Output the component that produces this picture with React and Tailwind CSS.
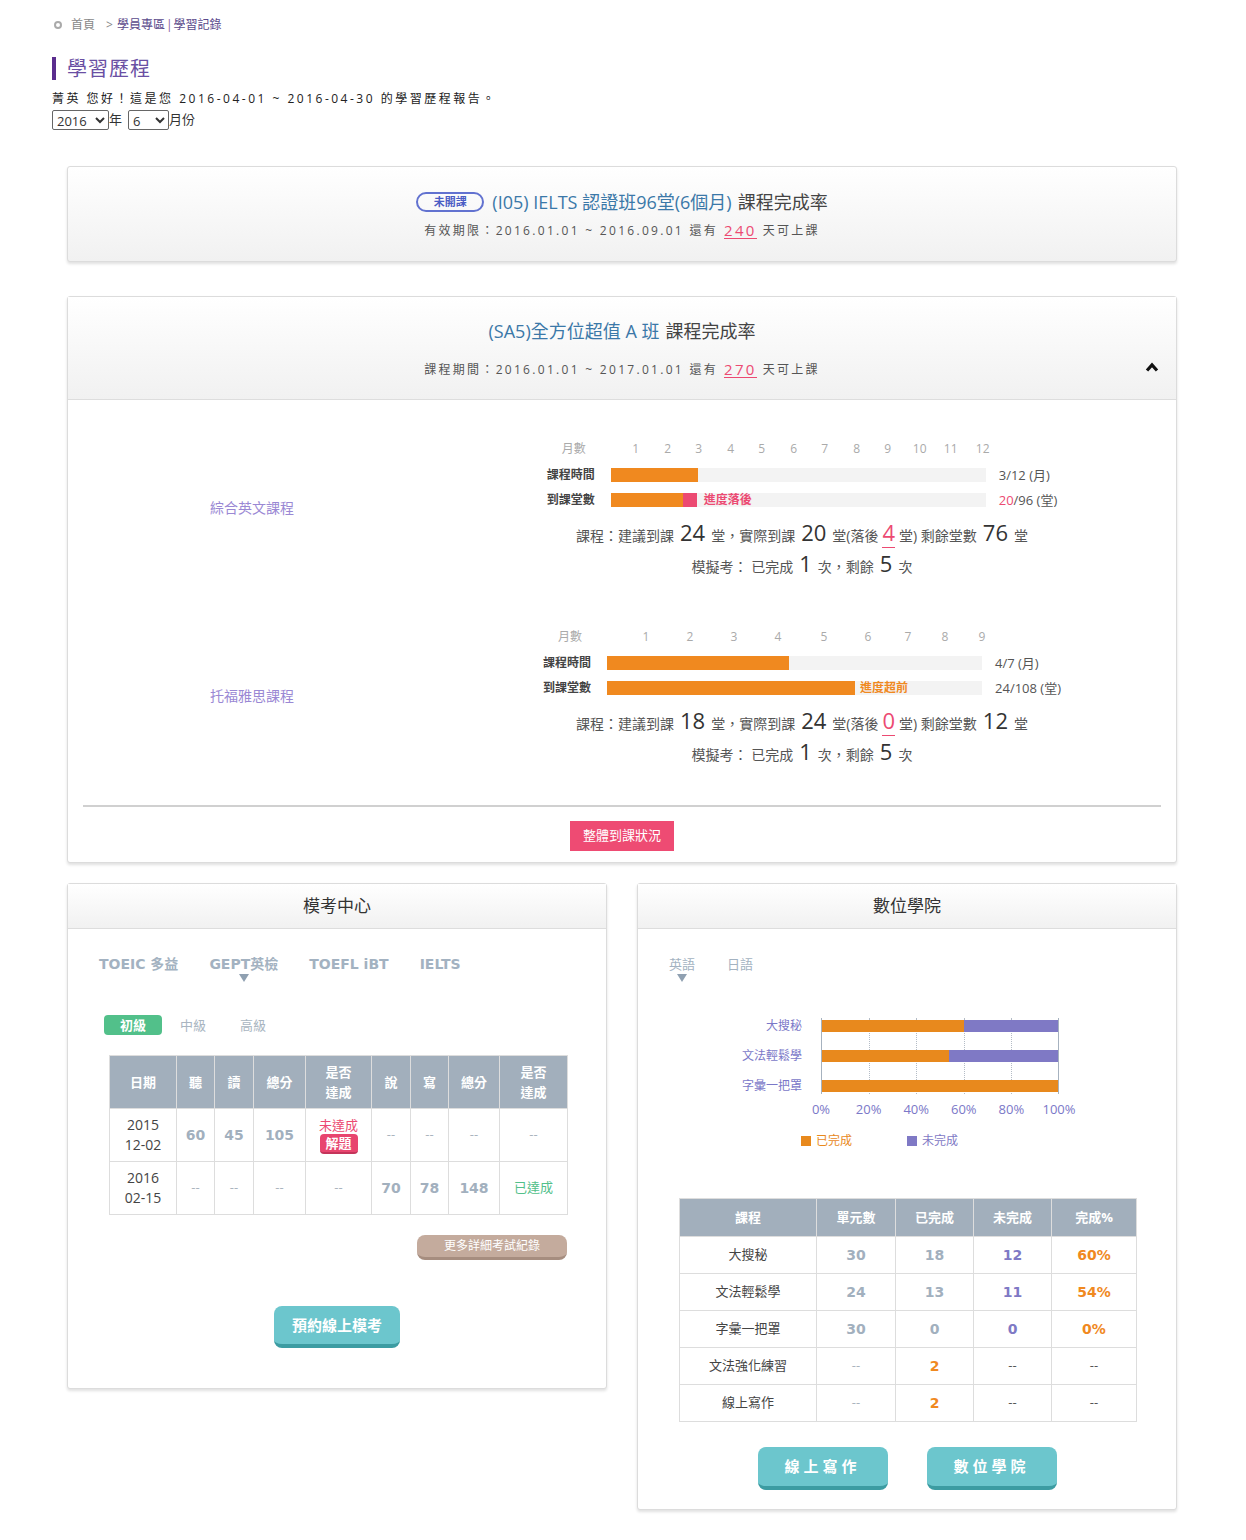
import React from 'react';

const ORANGE = 'bg-[#f0891f]';
const TEAL_BTN =
  'flex items-center justify-center rounded-[8px] border-b-[4px] border-[#3c9ca2] bg-[#6cc6cd] text-white font-bold';

const Card = ({ className = '', children }) => (
  <div
    className={`rounded-[3px] border border-[#dcdcdc] bg-white shadow-[0_2px_3px_rgba(0,0,0,0.12)] ${className}`}
  >
    {children}
  </div>
);

const DaysLeft = ({ n }) => (
  <span className="mx-[6px] border-b border-[#ec4a72] text-[15px] leading-[16px] text-[#ec4a72]">{n}</span>
);

const courses = [
  {
    name: '綜合英文課程',
    months: [1, 2, 3, 4, 5, 6, 7, 8, 9, 10, 11, 12],
    ticks: [25, 57, 88, 120, 151, 183, 214, 246, 277, 309, 340, 372],
    timeFill: 87,
    attendFill: 72,
    behindFill: 14,
    status: '進度落後',
    statusColor: 'text-[#ec4a72]',
    statusGap: 'ml-[7px]',
    timeText: '3/12 (月)',
    done: '20',
    doneColor: 'text-[#ec4a72]',
    total: '/96 (堂)',
    suggest: 24,
    actual: 20,
    behind: 4,
    remain: 76,
  },
  {
    name: '托福雅思課程',
    months: [1, 2, 3, 4, 5, 6, 7, 8, 9],
    ticks: [39, 83, 127, 171, 217, 261, 301, 338, 375],
    timeFill: 182,
    attendFill: 248,
    behindFill: 0,
    status: '進度超前',
    statusColor: 'text-[#f0891f]',
    statusGap: 'ml-[5px]',
    timeText: '4/7 (月)',
    done: '24',
    doneColor: 'text-[#555]',
    total: '/108 (堂)',
    suggest: 18,
    actual: 24,
    behind: 0,
    remain: 12,
  },
];

const Big = ({ children }) => <span className="mx-[6px] text-[22px] text-[#333]">{children}</span>;

const CourseRow = ({ c }) => (
  <div className="flex items-center">
    <div className="w-[338px] pb-[6px] text-center text-[14px] text-[#9a88d4]">{c.name}</div>
    <div className="flex flex-1 flex-col items-center pl-[22px]">
      <div className="flex flex-col">
        <div className="flex h-[16px] items-center">
          <span className="w-[54px] text-center text-[12px] leading-[16px] text-[#aaa]">月數</span>
          <div className="relative ml-[10px] h-[16px] w-[375px]">
            {c.months.map((m, i) => (
              <span
                key={m}
                className="absolute top-0 -translate-x-1/2 text-[12px] leading-[16px] text-[#aaa]"
                style={{ left: c.ticks[i] }}
              >
                {m}
              </span>
            ))}
          </div>
        </div>
        <div className="mt-[11px] flex items-center">
          <span className="w-[54px] text-[12px] font-bold leading-[14px] text-[#444]">課程時間</span>
          <div className="ml-[10px] flex h-[14px] w-[375px] bg-[#f3f3f3]">
            <div className={`h-full ${ORANGE}`} style={{ width: c.timeFill }} />
          </div>
          <span className="ml-[13px] text-[13px] leading-[14px] text-[#555]">{c.timeText}</span>
        </div>
        <div className="mt-[11px] flex items-center">
          <span className="w-[54px] text-[12px] font-bold leading-[14px] text-[#444]">到課堂數</span>
          <div className="ml-[10px] flex h-[14px] w-[375px] items-center bg-[#f3f3f3]">
            <div className={`h-full ${ORANGE}`} style={{ width: c.attendFill }} />
            {c.behindFill > 0 && <div className="h-full bg-[#ec4a72]" style={{ width: c.behindFill }} />}
            <span className={`${c.statusGap} text-[12px] font-bold leading-[14px] ${c.statusColor}`}>{c.status}</span>
          </div>
          <span className="ml-[13px] text-[13px] leading-[14px] text-[#555]">
            <span className={c.doneColor}>{c.done}</span>
            {c.total}
          </span>
        </div>
      </div>
      <p className="mt-[12px] text-[14px] leading-[26px] text-[#555]">
        課程：建議到課<Big>{c.suggest}</Big>堂，實際到課<Big>{c.actual}</Big>堂(落後
        <span className="mx-[4px] border-b border-[#ec4a72] text-[22px] leading-[22px] text-[#ec4a72]">{c.behind}</span>
        堂) 剩餘堂數<Big>{c.remain}</Big>堂
      </p>
      <p className="mt-[1px] text-[14px] leading-[26px] text-[#555]">
        模擬考： 已完成<Big>1</Big>次，剩餘<Big>5</Big>次
      </p>
    </div>
  </div>
);

const NUM = "font-['DejaVu_Sans','Noto_Sans_CJK_TC',sans-serif] font-bold text-[14px] text-[#a2b0be]";
const DASH = 'text-[13px] text-[#aab4be]';

const examCols = [67, 38, 39, 52, 66, 39, 38, 51, 68];
const examHead = ['日期', '聽', '讀', '總分', '是否\n達成', '說', '寫', '總分', '是否\n達成'];

const MockExam = () => (
  <Card className="w-[540px] self-start">
    <div className="flex h-[45px] items-center justify-center border-b border-[#ddd] bg-linear-to-b from-white to-[#f1f1f1] text-[17px] text-[#333]">
      模考中心
    </div>
    <div className="flex flex-col px-[31px] pb-[40px] pt-[25px]">
      <div className="flex gap-[31px] font-['DejaVu_Sans','Noto_Sans_CJK_TC',sans-serif] text-[14px] font-bold leading-[20px] text-[#a3b2c1]">
        <span>TOEIC 多益</span>
        <span className="relative">
          GEPT英檢
          <span className="absolute left-1/2 top-[20px] -translate-x-1/2 border-x-[5px] border-t-[8px] border-x-transparent border-t-[#8fa0b1]" />
        </span>
        <span>TOEFL iBT</span>
        <span>IELTS</span>
      </div>
      <div className="ml-[5px] mt-[41px] flex gap-[2px] text-[13px] leading-[20px]">
        <span className="w-[58px] rounded-[4px] bg-[#52c08a] text-center font-bold text-white">初級</span>
        <span className="w-[58px] text-center text-[#a9b5c1]">中級</span>
        <span className="w-[58px] text-center text-[#a9b5c1]">高級</span>
      </div>
      <table className="ml-[10px] mt-[20px] w-[458px] table-fixed border-collapse text-center">
        <colgroup>
          {examCols.map((w, i) => (
            <col key={i} style={{ width: w }} />
          ))}
        </colgroup>
        <thead>
          <tr className="h-[53px] bg-[#a2afbc]">
            {examHead.map((h, i) => (
              <th key={i} className="whitespace-pre-line border border-[#ddd] text-[13px] font-bold leading-[20px] text-white">
                {h}
              </th>
            ))}
          </tr>
        </thead>
        <tbody>
          <tr className="h-[53px]">
            <td className="border border-[#ddd] text-[14px] leading-[20px] text-[#444]">
              2015
              <br />
              12-02
            </td>
            <td className={`border border-[#ddd] ${NUM}`}>60</td>
            <td className={`border border-[#ddd] ${NUM}`}>45</td>
            <td className={`border border-[#ddd] ${NUM}`}>105</td>
            <td className="border border-[#ddd]">
              <div className="flex flex-col items-center">
                <span className="text-[13px] leading-[17px] text-[#ec4a72]">未達成</span>
                <span className="h-[20px] w-[38px] rounded-[4px] border-b-2 border-[#c4345a] bg-[#e8456f] text-[13px] font-bold leading-[18px] text-white">
                  解題
                </span>
              </div>
            </td>
            {[0, 1, 2, 3].map((i) => (
              <td key={i} className={`border border-[#ddd] ${DASH}`}>--</td>
            ))}
          </tr>
          <tr className="h-[53px]">
            <td className="border border-[#ddd] text-[14px] leading-[20px] text-[#444]">
              2016
              <br />
              02-15
            </td>
            {[0, 1, 2, 3].map((i) => (
              <td key={i} className={`border border-[#ddd] ${DASH}`}>--</td>
            ))}
            <td className={`border border-[#ddd] ${NUM}`}>70</td>
            <td className={`border border-[#ddd] ${NUM}`}>78</td>
            <td className={`border border-[#ddd] ${NUM}`}>148</td>
            <td className="border border-[#ddd] text-[13px] text-[#52c08a]">已達成</td>
          </tr>
        </tbody>
      </table>
      <div className="mt-[20px] flex justify-end pr-[8px]">
        <span className="flex h-[25px] w-[150px] items-center justify-center rounded-[8px] border-b-[3px] border-[#a68d7f] bg-[#c4ab9d] text-[12px] text-white">
          更多詳細考試紀錄
        </span>
      </div>
      <div className="mt-[46px] flex justify-center">
        <span className={`${TEAL_BTN} h-[42px] w-[126px] text-[15px]`}>預約線上模考</span>
      </div>
    </div>
  </Card>
);

const bars = [
  { name: '大搜秘', done: 60 },
  { name: '文法輕鬆學', done: 54 },
  { name: '字彙一把罩', done: 100 },
];

const units = [
  ['大搜秘', '30', '18', '12', '60%'],
  ['文法輕鬆學', '24', '13', '11', '54%'],
  ['字彙一把罩', '30', '0', '0', '0%'],
  ['文法強化練習', '--', '2', '--', '--'],
  ['線上寫作', '--', '2', '--', '--'],
];

const Academy = () => (
  <Card className="w-[540px]">
    <div className="flex h-[45px] items-center justify-center border-b border-[#ddd] bg-linear-to-b from-white to-[#f1f1f1] text-[17px] text-[#333]">
      數位學院
    </div>
    <div className="flex flex-col pb-[19px] pt-[25px]">
      <div className="ml-[31px] flex gap-[32px] text-[13px] leading-[20px] text-[#a3b2c1]">
        <span className="relative">
          英語
          <span className="absolute left-1/2 top-[20px] -translate-x-1/2 border-x-[5px] border-t-[8px] border-x-transparent border-t-[#8fa0b1]" />
        </span>
        <span>日語</span>
      </div>
      <div className="ml-[64px] mt-[44px] flex">
        <div className="flex w-[100px] flex-col text-right text-[12px] leading-[16px] text-[#7b78c8]">
          <span className="h-[16px]">大搜秘</span>
          <span className="mt-[14px] h-[16px]">文法輕鬆學</span>
          <span className="mt-[14px] h-[16px]">字彙一把罩</span>
        </div>
        <div className="relative ml-[19px] h-[76px] w-[238px] border-x border-[#a6b2bf]">
          {['left-[20%]', 'left-[40%]', 'left-[60%]', 'left-[80%]'].map((l) => (
            <span key={l} className={`absolute top-0 h-full border-l border-dotted border-[#b4bcc6] ${l}`} />
          ))}
          <div className="relative flex flex-col gap-[18px] pt-[2px]">
            {bars.map((b) => (
              <div key={b.name} className="flex h-[12px]">
                <div className="h-full bg-[#e8891d]" style={{ width: `${b.done}%` }} />
                <div className="h-full flex-1 bg-[#7f79c5]" />
              </div>
            ))}
          </div>
        </div>
      </div>
      <div className="relative ml-[183px] mt-[7px] h-[16px] w-[238px] text-[13px] leading-[16px] text-[#7b78c8]">
        {[
          ['0%', 'left-[0%]'],
          ['20%', 'left-[20%]'],
          ['40%', 'left-[40%]'],
          ['60%', 'left-[60%]'],
          ['80%', 'left-[80%]'],
          ['100%', 'left-[100%]'],
        ].map(([t, l]) => (
          <span key={t} className={`absolute top-0 -translate-x-1/2 ${l}`}>
            {t}
          </span>
        ))}
      </div>
      <div className="ml-[163px] mt-[16px] flex items-center text-[12px] leading-[16px]">
        <span className="h-[10px] w-[10px] bg-[#e8891d]" />
        <span className="ml-[5px] text-[#e8891d]">已完成</span>
        <span className="ml-[55px] h-[10px] w-[10px] bg-[#7f79c5]" />
        <span className="ml-[5px] text-[#7f79c5]">未完成</span>
      </div>
      <table className="ml-[41px] mt-[49px] w-[457px] table-fixed border-collapse text-center">
        <colgroup>
          {[137, 79, 78, 78, 85].map((w, i) => (
            <col key={i} style={{ width: w }} />
          ))}
        </colgroup>
        <thead>
          <tr className="h-[38px] bg-[#a2afbc]">
            {['課程', '單元數', '已完成', '未完成', '完成%'].map((h) => (
              <th key={h} className="border border-[#ddd] text-[13px] font-bold text-white">
                {h}
              </th>
            ))}
          </tr>
        </thead>
        <tbody>
          {units.map((r) => (
            <tr key={r[0]} className="h-[37px]">
              <td className="border border-[#ddd] text-[13px] text-[#444]">{r[0]}</td>
              <td className={`border border-[#ddd] ${r[1] === '--' ? DASH : NUM}`}>{r[1]}</td>
              <td
                className={`border border-[#ddd] ${
                  r[4] === '--'
                    ? "font-['DejaVu_Sans',sans-serif] text-[14px] font-bold text-[#f0891f]"
                    : NUM
                }`}
              >
                {r[2]}
              </td>
              <td
                className={`border border-[#ddd] ${
                  r[3] === '--'
                    ? 'text-[13px] text-[#555]'
                    : "font-['DejaVu_Sans',sans-serif] text-[14px] font-bold text-[#7f79c5]"
                }`}
              >
                {r[3]}
              </td>
              <td
                className={`border border-[#ddd] ${
                  r[4] === '--'
                    ? 'text-[13px] text-[#555]'
                    : "font-['DejaVu_Sans',sans-serif] text-[14px] font-bold text-[#f0891f]"
                }`}
              >
                {r[4]}
              </td>
            </tr>
          ))}
        </tbody>
      </table>
      <div className="mt-[25px] flex justify-center gap-[39px]">
        <span className={`${TEAL_BTN} h-[43px] w-[130px] text-[15px] tracking-[4px]`}>線上寫作</span>
        <span className={`${TEAL_BTN} h-[43px] w-[130px] text-[15px] tracking-[4px]`}>數位學院</span>
      </div>
    </div>
  </Card>
);

const App = () => (
  <div className="min-h-[1540px] w-[1246px] bg-white pb-[30px] font-['Open_Sans','Noto_Sans_CJK_TC',sans-serif] text-[#444]">
    <div className="flex items-center pl-[54px] pt-[18px] text-[12px] leading-[14px]">
      <span className="mr-[9px] h-[8px] w-[8px] rounded-full border-2 border-[#aaa]" />
      <span className="text-[#888]">首頁</span>
      <span className="ml-[11px] mr-[4px] text-[#888]">&gt;</span>
      <span className="text-[#5a4a8c]">學員專區</span>
      <span className="mx-[1px] text-[#8a5a9c]">|</span>
      <span className="text-[#5a4a8c]">學習記錄</span>
    </div>

    <div className="ml-[52px] mt-[25px] flex items-center">
      <span className="h-[23px] w-[4px] bg-[#5b2d8e]" />
      <h1 className="ml-[11px] text-[20px] leading-[23px] tracking-[1px] text-[#6a4fa3]">學習歷程</h1>
    </div>
    <p className="ml-[52px] mt-[12px] text-[12px] leading-[14px] tracking-[2.5px] text-[#222]">
      菁英 您好！這是您 2016-04-01 ~ 2016-04-30 的學習歷程報告。
    </p>
    <div className="ml-[52px] mt-[4px] flex items-center text-[13px] text-[#333]">
      <select className="h-[20px] w-[57px] rounded-[2px] border border-[#666] bg-white text-[13px]" defaultValue="2016">
        <option>2016</option>
      </select>
      <span>年</span>
      <select className="ml-[6px] h-[20px] w-[41px] rounded-[2px] border border-[#666] bg-white text-[13px]" defaultValue="6">
        <option>6</option>
      </select>
      <span>月份</span>
    </div>

    <div className="ml-[67px] mt-[36px] flex w-[1110px] flex-col">
      <Card className="bg-linear-to-b from-white to-[#f1f1f1]">
        <div className="flex h-[94px] flex-col items-center pt-[22px]">
          <div className="flex items-center text-[18px] leading-[26px]">
            <span className="mr-[8px] flex h-[20px] w-[68px] items-center justify-center rounded-full border-2 border-[#6272d0] text-[11px] font-bold text-[#4a5cc4]">
              未開課
            </span>
            <span className="text-[#3b78a8]">(I05) IELTS 認證班96堂(6個月)</span>
            <span className="ml-[6px] text-[#444]">課程完成率</span>
          </div>
          <p className="mt-[7px] flex items-end text-[12px] leading-[16px] tracking-[2.3px] text-[#555]">
            有效期限：2016.01.01 ~ 2016.09.01 還有<DaysLeft n="240" />天可上課
          </p>
        </div>
      </Card>

      <Card className="mt-[34px]">
        <div className="relative flex h-[103px] flex-col items-center border-b border-[#ddd] bg-linear-to-b from-white to-[#f1f1f1] pt-[21px]">
          <div className="text-[18px] leading-[26px]">
            <span className="text-[#3b78a8]">(SA5)全方位超值 A 班</span>
            <span className="ml-[6px] text-[#444]">課程完成率</span>
          </div>
          <p className="mt-[17px] flex items-end text-[12px] leading-[16px] tracking-[2.3px] text-[#555]">
            課程期間：2016.01.01 ~ 2017.01.01 還有<DaysLeft n="270" />天可上課
          </p>
          <svg className="absolute right-[17px] top-[65px]" width="14" height="10" viewBox="0 0 14 10">
            <path d="M2 8.5 L7 3 L12 8.5" fill="none" stroke="#111" strokeWidth="3.2" />
          </svg>
        </div>
        <div className="flex flex-col px-[15px] pb-[11px] pt-[41px]">
          <CourseRow c={courses[0]} />
          <div className="mt-[49px]">
            <CourseRow c={courses[1]} />
          </div>
          <div className="mt-[37px] h-[2px] bg-[#d0d0d0]" />
          <div className="mt-[14px] flex justify-center">
            <span className="flex h-[30px] w-[104px] items-center justify-center bg-[#ee4b73] text-[13px] text-white">
              整體到課狀況
            </span>
          </div>
        </div>
      </Card>

      <div className="mt-[20px] flex items-start justify-between">
        <MockExam />
        <Academy />
      </div>
    </div>
  </div>
);

export default App;
